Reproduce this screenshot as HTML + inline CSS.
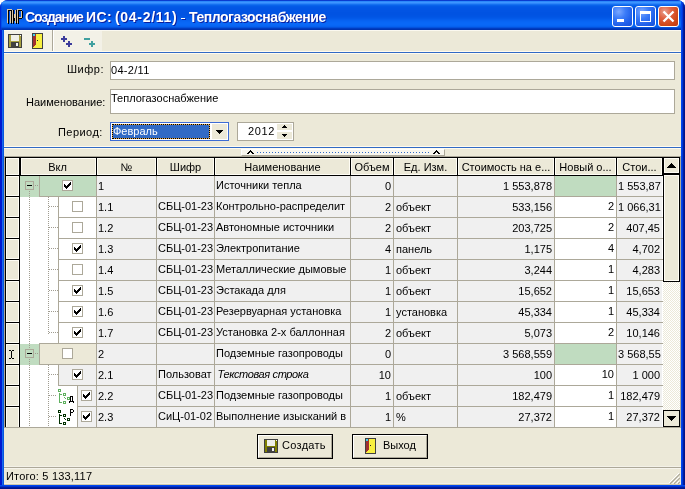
<!DOCTYPE html><html><head><meta charset="utf-8"><style>
html,body{margin:0;padding:0;background:#fff;width:685px;height:489px;overflow:hidden}
body{position:relative;font-family:"Liberation Sans",sans-serif;font-size:11px;color:#000}
div{position:absolute;box-sizing:border-box}
.t{white-space:pre;line-height:13px;will-change:transform}
</style></head><body>
<div style="left:0;top:0;width:685px;height:489px;border-radius:8px 8px 0 0;overflow:hidden;background:#0054E3">
<div style="left:0px;top:0px;width:685px;height:30px;background:linear-gradient(180deg,#0A3CD0 0px,#0A3CD0 1px,#2C88FA 1px,#2C88FA 2px,#3D95FF 2px,#3D95FF 3px,#2E86FA 3px,#2E86FA 4px,#1570F0 4px,#1570F0 5px,#0862EA 5px,#0862EA 6px,#045AE6 6px,#045AE6 7px,#0357E5 7px,#0357E5 8px,#0256E4 8px,#0256E4 9px,#0255E4 9px,#0255E4 10px,#0254E3 10px,#0254E3 11px,#0254E3 11px,#0254E3 12px,#0153E2 12px,#0153E2 13px,#0153E2 13px,#0153E2 14px,#0153E2 14px,#0153E2 15px,#0154E3 15px,#0154E3 16px,#0155E4 16px,#0155E4 17px,#0257E6 17px,#0257E6 18px,#035AE9 18px,#035AE9 19px,#055EED 19px,#055EED 20px,#0762F1 20px,#0762F1 21px,#0865F4 21px,#0865F4 22px,#0967F6 22px,#0967F6 23px,#0968F7 23px,#0968F7 24px,#0968F7 24px,#0968F7 25px,#0866F5 25px,#0866F5 26px,#0661EF 26px,#0661EF 27px,#0452DD 27px,#0452DD 28px,#003DC2 28px,#003DC2 29px,#0033B0 29px,#0033B0 30px)"></div>
<div style="left:0px;top:30px;width:4px;height:459px;background:linear-gradient(90deg,#0019CF 0,#0019CF 2px,#166AEE 2px,#166AEE 3px,#0855DD 3px,#0855DD 4px)"></div>
<div style="left:0px;top:0px;width:2px;height:30px;background:linear-gradient(90deg,#0028D0 0,#0030D8 1px,rgba(0,60,230,0.5) 1px,rgba(0,60,230,0.5) 2px)"></div>
<div style="left:681px;top:0px;width:4px;height:489px;background:linear-gradient(90deg,#0047EE 0,#0047EE 1px,#0036D8 1px,#0036D8 2px,#001EA0 2px,#001EA0 3px,#00138C 3px)"></div>
<div style="left:0px;top:485px;width:685px;height:4px;background:linear-gradient(180deg,#0047EE 0,#0047EE 1px,#0033D0 1px,#0033D0 2px,#001EA0 2px,#001EA0 3px,#00138C 3px)"></div>
</div>
<svg style="position:absolute;left:7px;top:9px" width="16" height="15" viewBox="0 0 16 15" shape-rendering="crispEdges"><g fill="#DCCBA8"><rect x="0" y="0" width="5" height="1"/><rect x="0" y="0" width="1" height="14"/><rect x="3" y="1" width="1" height="13"/><rect x="5" y="1" width="1" height="13"/><rect x="8" y="1" width="1" height="13"/><rect x="7" y="5" width="1" height="4"/><rect x="10" y="0" width="5" height="1"/><rect x="10" y="0" width="1" height="14"/><rect x="14" y="1" width="1" height="8"/><rect x="12" y="8" width="2" height="1"/></g><g fill="#000"><rect x="1" y="1" width="4" height="1"/><rect x="1" y="1" width="1" height="14"/><rect x="4" y="1" width="1" height="14"/><rect x="6" y="1" width="1" height="14"/><rect x="9" y="1" width="1" height="14"/><rect x="7" y="9" width="1" height="3"/><rect x="11" y="1" width="1" height="14"/><rect x="11" y="1" width="4" height="1"/><rect x="15" y="2" width="1" height="7"/><rect x="12" y="9" width="3" height="1"/></g></svg>
<div class="t" style="left:25px;top:9px;color:#fff;font-weight:bold;font-size:14px;line-height:16px;text-shadow:1px 1px #0A1E9E;letter-spacing:-1.15px">Создание</div>
<div class="t" style="left:86px;top:9px;color:#fff;font-weight:bold;font-size:14px;line-height:16px;text-shadow:1px 1px #0A1E9E;letter-spacing:0.4px">ИС:</div>
<div class="t" style="left:115px;top:9px;color:#fff;font-weight:bold;font-size:14px;line-height:16px;text-shadow:1px 1px #0A1E9E;letter-spacing:0.7px">(04-2/11)</div>
<div style="left:181px;top:18px;width:4px;height:1px;background:#fff;box-shadow:1px 1px #0A1E9E"></div>
<div class="t" style="left:189px;top:9px;color:#fff;font-weight:bold;font-size:14px;line-height:16px;text-shadow:1px 1px #0A1E9E;letter-spacing:-0.46px">Теплогазоснабжение</div>
<div style="left:612px;top:6px;width:21px;height:21px;border:1px solid #fff;border-radius:3px;background:radial-gradient(circle at 30% 25%,#7CA8FF 0,#3C7CF8 35%,#1F5FEA 70%,#1650D8 100%)"></div>
<div style="left:635px;top:6px;width:21px;height:21px;border:1px solid #fff;border-radius:3px;background:radial-gradient(circle at 30% 25%,#7CA8FF 0,#3C7CF8 35%,#1F5FEA 70%,#1650D8 100%)"></div>
<div style="left:658px;top:6px;width:21px;height:21px;border:1px solid #fff;border-radius:3px;background:radial-gradient(circle at 30% 25%,#E8A090 0,#E06040 35%,#D04818 70%,#C03810 100%)"></div>
<div style="left:617px;top:19px;width:7px;height:3px;background:#fff"></div>
<div style="left:640px;top:11px;width:11px;height:11px;border:1px solid #fff;border-top-width:3px"></div>
<svg style="position:absolute;left:662px;top:10px" width="13" height="13" viewBox="0 0 13 13"><path d="M1.5 1.5L11.5 11.5M11.5 1.5L1.5 11.5" stroke="#fff" stroke-width="2.3"/></svg>
<div style="left:4px;top:30px;width:677px;height:455px;background:#ECE9D8"></div>
<div style="left:4px;top:30px;width:98px;height:22px;background:#F3F1E7"></div>
<div style="left:4px;top:30px;width:677px;height:1px;background:#FBF9F0"></div>
<div style="left:52px;top:30px;width:1px;height:22px;background:#ACA899"></div>
<div style="left:53px;top:30px;width:1px;height:22px;background:#fff"></div>
<div style="left:4px;top:51px;width:677px;height:1px;background:#FFFBEF"></div>
<div style="left:4px;top:52px;width:677px;height:1px;background:#316AC5"></div>
<div style="left:4px;top:53px;width:677px;height:1px;background:#FFFBEF"></div>
<svg style="position:absolute;left:8px;top:34px" width="14" height="14" viewBox="0 0 14 14" shape-rendering="crispEdges">
<rect x="0" y="0" width="14" height="14" fill="#404040"/>
<rect x="1" y="1" width="12" height="12" fill="#A8A040"/>
<rect x="3" y="1" width="8" height="6" fill="#F0F0E8"/>
<rect x="3" y="8" width="8" height="5" fill="#404040"/>
<rect x="8" y="9" width="2" height="3" fill="#F0F0F0"/>
<rect x="12" y="1" width="1" height="1" fill="#fff"/>
</svg>
<svg style="position:absolute;left:32px;top:33px" width="11" height="16" viewBox="0 0 11 16" shape-rendering="crispEdges">
<rect x="0" y="0" width="11" height="16" fill="#404040"/>
<rect x="1" y="1" width="9" height="14" fill="#F8F040"/>
<path d="M1 1H4V11L1 15Z" fill="#A03030"/>
<rect x="1" y="1" width="2" height="2" fill="#40D0F0"/>
<rect x="5" y="7" width="1" height="1" fill="#202020"/>
</svg>
<div style="left:61px;top:38px;width:6px;height:2px;background:#3C3C9C"></div><div style="left:63px;top:36px;width:2px;height:6px;background:#3C3C9C"></div>
<div style="left:66px;top:43px;width:6px;height:2px;background:#3C3C9C"></div><div style="left:68px;top:41px;width:2px;height:6px;background:#3C3C9C"></div>
<div style="left:84px;top:38px;width:6px;height:2px;background:#40A0A0"></div>
<div style="left:89px;top:43px;width:6px;height:2px;background:#40A0A0"></div><div style="left:91px;top:41px;width:2px;height:6px;background:#40A0A0"></div>
<div class="t" style="left:67px;top:63px;letter-spacing:0.5px">Шифр:</div>
<div class="t" style="left:26px;top:96px;">Наименование:</div>
<div class="t" style="left:58px;top:126px;letter-spacing:0.45px">Период:</div>
<div style="left:110px;top:61px;width:565px;height:19px;border:1px solid #ACA899;background:#fff"></div>
<div class="t" style="left:111px;top:64px;letter-spacing:0.3px">04-2/11</div>
<div style="left:110px;top:89px;width:565px;height:25px;border:1px solid #ACA899;background:#fff"></div>
<div class="t" style="left:111px;top:92px;">Теплогазоснабжение</div>
<div style="left:110px;top:122px;width:119px;height:19px;border:1px solid #3D6CD4;background:#fff"></div>
<div style="left:112px;top:124px;width:98px;height:15px;background:#316AC5;border:1px solid #E8A848"></div>
<div style="left:112px;top:124px;width:98px;height:15px;border:1px dotted #000"></div>
<div class="t" style="left:113px;top:125px;color:#fff">Февраль</div>
<div style="left:212px;top:124px;width:15px;height:15px;background:#ECE9D8"></div>
<svg style="position:absolute;left:216px;top:130px" width="7" height="4" viewBox="0 0 7 4" shape-rendering="crispEdges"><path d="M0 0H7V1H6V2H5V3H4V4H3V3H2V2H1V1H0Z" fill="#000"/></svg>
<div style="left:237px;top:122px;width:57px;height:19px;border:1px solid #ACA899;background:#fff"></div>
<div class="t" style="left:248px;top:125px;letter-spacing:0.6px">2012</div>
<div style="left:277px;top:124px;width:15px;height:6px;background:#ECE9D8"></div>
<div style="left:277px;top:132px;width:15px;height:7px;background:#ECE9D8"></div>
<svg style="position:absolute;left:282px;top:125px" width="5" height="3" viewBox="0 0 5 3" shape-rendering="crispEdges"><path d="M2 0H3V1H4V2H5V3H0V2H1V1H2Z" fill="#000"/></svg>
<svg style="position:absolute;left:282px;top:134px" width="5" height="3" viewBox="0 0 5 3" shape-rendering="crispEdges"><path d="M0 0H5V1H4V2H3V3H2V2H1V1H0Z" fill="#000"/></svg>
<div style="left:4px;top:146px;width:677px;height:1px;background:#FFFBEF"></div>
<div style="left:4px;top:147px;width:677px;height:1px;background:#316AC5"></div>
<div style="left:4px;top:148px;width:677px;height:1px;background:#FFFBEF"></div>
<div style="left:241px;top:149px;width:204px;height:7px;background:#F8F6EE;border-left:1px solid #fff;border-top:1px solid #fff;border-right:1px solid #ACA899;border-bottom:1px solid #ACA899"></div>
<svg style="position:absolute;left:247px;top:150px" width="7" height="4" viewBox="0 0 7 4" shape-rendering="crispEdges"><path d="M3 0H4V1H5V2H6V3H7V4H5V3H4V2H3V3H2V4H0V3H1V2H2V1H3Z" fill="#000"/></svg>
<svg style="position:absolute;left:433px;top:150px" width="7" height="4" viewBox="0 0 7 4" shape-rendering="crispEdges"><path d="M3 0H4V1H5V2H6V3H7V4H5V3H4V2H3V3H2V4H0V3H1V2H2V1H3Z" fill="#000"/></svg>
<div style="left:257px;top:152px;width:172px;height:1px;background:repeating-linear-gradient(90deg,#316AC5 0,#316AC5 1px,transparent 1px,transparent 3px)"></div>
<div style="left:4px;top:156px;width:677px;height:272px;border:1px solid #ACA899;background:#ECE9D8"></div>
<div style="left:5px;top:157px;width:675px;height:1px;background:#000"></div>
<div style="left:5px;top:157px;width:1px;height:270px;background:#000"></div>
<div style="left:679px;top:157px;width:1px;height:270px;background:#000"></div>
<div style="left:5px;top:175px;width:658px;height:1px;background:#000"></div>
<div style="left:6px;top:158px;width:13px;height:17px;background:#ECE9D8;border:1px solid #FFFDF5"></div>
<div style="left:19px;top:157px;width:2px;height:19px;background:#000"></div>
<div style="left:21px;top:158px;width:75px;height:17px;background:#ECE9D8;border:1px solid #FFFDF5"></div>
<div style="left:96px;top:157px;width:1px;height:19px;background:#000"></div>
<div class="t" style="left:20px;top:161px;width:75px;text-align:center;overflow:hidden">Вкл</div>
<div style="left:97px;top:158px;width:59px;height:17px;background:#ECE9D8;border:1px solid #FFFDF5"></div>
<div style="left:156px;top:157px;width:1px;height:19px;background:#000"></div>
<div class="t" style="left:97px;top:161px;width:59px;text-align:center;overflow:hidden">№</div>
<div style="left:157px;top:158px;width:57px;height:17px;background:#ECE9D8;border:1px solid #FFFDF5"></div>
<div style="left:214px;top:157px;width:1px;height:19px;background:#000"></div>
<div class="t" style="left:157px;top:161px;width:57px;text-align:center;overflow:hidden">Шифр</div>
<div style="left:215px;top:158px;width:135px;height:17px;background:#ECE9D8;border:1px solid #FFFDF5"></div>
<div style="left:350px;top:157px;width:1px;height:19px;background:#000"></div>
<div class="t" style="left:215px;top:161px;width:135px;text-align:center;overflow:hidden">Наименование</div>
<div style="left:351px;top:158px;width:42px;height:17px;background:#ECE9D8;border:1px solid #FFFDF5"></div>
<div style="left:393px;top:157px;width:1px;height:19px;background:#000"></div>
<div class="t" style="left:351px;top:161px;width:42px;text-align:center;overflow:hidden">Объем</div>
<div style="left:394px;top:158px;width:63px;height:17px;background:#ECE9D8;border:1px solid #FFFDF5"></div>
<div style="left:457px;top:157px;width:1px;height:19px;background:#000"></div>
<div class="t" style="left:394px;top:161px;width:63px;text-align:center;overflow:hidden">Ед. Изм.</div>
<div style="left:458px;top:158px;width:96px;height:17px;background:#ECE9D8;border:1px solid #FFFDF5"></div>
<div style="left:554px;top:157px;width:1px;height:19px;background:#000"></div>
<div class="t" style="left:458px;top:161px;width:96px;text-align:center;overflow:hidden">Стоимость на е...</div>
<div style="left:555px;top:158px;width:61px;height:17px;background:#ECE9D8;border:1px solid #FFFDF5"></div>
<div style="left:616px;top:157px;width:1px;height:19px;background:#000"></div>
<div class="t" style="left:555px;top:161px;width:61px;text-align:center;overflow:hidden">Новый о...</div>
<div style="left:617px;top:158px;width:45px;height:17px;background:#ECE9D8;border:1px solid #FFFDF5"></div>
<div style="left:662px;top:157px;width:1px;height:19px;background:#000"></div>
<div class="t" style="left:617px;top:161px;width:45px;text-align:center;overflow:hidden">Стои...</div>
<div style="left:6px;top:176px;width:13px;height:20px;background:#ECE9D8;border:1px solid #FFFDF5"></div>
<div style="left:5px;top:196px;width:15px;height:1px;background:#000"></div>
<div style="left:6px;top:197px;width:13px;height:20px;background:#ECE9D8;border:1px solid #FFFDF5"></div>
<div style="left:5px;top:217px;width:15px;height:1px;background:#000"></div>
<div style="left:6px;top:218px;width:13px;height:20px;background:#ECE9D8;border:1px solid #FFFDF5"></div>
<div style="left:5px;top:238px;width:15px;height:1px;background:#000"></div>
<div style="left:6px;top:239px;width:13px;height:20px;background:#ECE9D8;border:1px solid #FFFDF5"></div>
<div style="left:5px;top:259px;width:15px;height:1px;background:#000"></div>
<div style="left:6px;top:260px;width:13px;height:20px;background:#ECE9D8;border:1px solid #FFFDF5"></div>
<div style="left:5px;top:280px;width:15px;height:1px;background:#000"></div>
<div style="left:6px;top:281px;width:13px;height:20px;background:#ECE9D8;border:1px solid #FFFDF5"></div>
<div style="left:5px;top:301px;width:15px;height:1px;background:#000"></div>
<div style="left:6px;top:302px;width:13px;height:20px;background:#ECE9D8;border:1px solid #FFFDF5"></div>
<div style="left:5px;top:322px;width:15px;height:1px;background:#000"></div>
<div style="left:6px;top:323px;width:13px;height:20px;background:#ECE9D8;border:1px solid #FFFDF5"></div>
<div style="left:5px;top:343px;width:15px;height:1px;background:#000"></div>
<div style="left:6px;top:344px;width:13px;height:20px;background:#ECE9D8;border:1px solid #FFFDF5"></div>
<div style="left:5px;top:364px;width:15px;height:1px;background:#000"></div>
<div style="left:6px;top:365px;width:13px;height:20px;background:#ECE9D8;border:1px solid #FFFDF5"></div>
<div style="left:5px;top:385px;width:15px;height:1px;background:#000"></div>
<div style="left:6px;top:386px;width:13px;height:20px;background:#ECE9D8;border:1px solid #FFFDF5"></div>
<div style="left:5px;top:406px;width:15px;height:1px;background:#000"></div>
<div style="left:6px;top:407px;width:13px;height:21px;background:#ECE9D8;border:1px solid #FFFDF5"></div>
<div style="left:19px;top:176px;width:1px;height:251px;background:#000"></div>
<svg style="position:absolute;left:9px;top:350px" width="5" height="9" viewBox="0 0 5 9" shape-rendering="crispEdges"><path d="M0 0H2V1H3V0H5V1H3V8H5V9H3V8H2V9H0V8H2V1H0Z" fill="#000"/></svg>
<div style="left:20px;top:176px;width:643px;height:251px;background:#fff"></div>
<div style="left:97px;top:176px;width:59px;height:20px;background:#F0F0F0"></div>
<div style="left:156px;top:176px;width:1px;height:21px;background:#ACA899"></div>
<div style="left:97px;top:196px;width:60px;height:1px;background:#ACA899"></div>
<div class="t" style="left:98px;top:180px;width:58px;overflow:hidden">1</div>
<div style="left:157px;top:176px;width:57px;height:20px;background:#F0F0F0"></div>
<div style="left:214px;top:176px;width:1px;height:21px;background:#ACA899"></div>
<div style="left:157px;top:196px;width:58px;height:1px;background:#ACA899"></div>
<div style="left:215px;top:176px;width:135px;height:20px;background:#F0F0F0"></div>
<div style="left:350px;top:176px;width:1px;height:21px;background:#ACA899"></div>
<div style="left:215px;top:196px;width:136px;height:1px;background:#ACA899"></div>
<div class="t" style="left:216px;top:179px;width:134px;overflow:hidden">Источники тепла</div>
<div style="left:351px;top:176px;width:42px;height:20px;background:#F0F0F0"></div>
<div style="left:393px;top:176px;width:1px;height:21px;background:#ACA899"></div>
<div style="left:351px;top:196px;width:43px;height:1px;background:#ACA899"></div>
<div class="t" style="left:352px;top:180px;width:39px;overflow:hidden;display:flex;justify-content:flex-end"><span style="flex:none">0</span></div>
<div style="left:394px;top:176px;width:63px;height:20px;background:#F0F0F0"></div>
<div style="left:457px;top:176px;width:1px;height:21px;background:#ACA899"></div>
<div style="left:394px;top:196px;width:64px;height:1px;background:#ACA899"></div>
<div style="left:458px;top:176px;width:96px;height:20px;background:#F0F0F0"></div>
<div style="left:554px;top:176px;width:1px;height:21px;background:#ACA899"></div>
<div style="left:458px;top:196px;width:97px;height:1px;background:#ACA899"></div>
<div class="t" style="left:459px;top:180px;width:93px;overflow:hidden;display:flex;justify-content:flex-end"><span style="flex:none">1 553,878</span></div>
<div style="left:555px;top:176px;width:61px;height:20px;background:#C0DCC0"></div>
<div style="left:616px;top:176px;width:1px;height:21px;background:#ACA899"></div>
<div style="left:555px;top:196px;width:62px;height:1px;background:#ACA899"></div>
<div style="left:617px;top:176px;width:45px;height:20px;background:#F0F0F0"></div>
<div style="left:617px;top:196px;width:46px;height:1px;background:#ACA899"></div>
<div class="t" style="left:618px;top:180px;width:44px;overflow:hidden">1 553,87</div>
<div style="left:20px;top:176px;width:19px;height:21px;background:#C0DCC0"></div>
<div style="left:39px;top:176px;width:57px;height:20px;background:#C0DCC0"></div>
<div style="left:39px;top:176px;width:1px;height:20px;background:#ACA899"></div>
<div style="left:39px;top:196px;width:58px;height:1px;background:#ACA899"></div>
<div style="left:62px;top:180px;width:11px;height:11px;border:1px solid #ACA899;background:#fff"></div><svg style="position:absolute;left:64px;top:182px" width="7" height="7" viewBox="0 0 7 7" shape-rendering="crispEdges"><path d="M6 0H7V3H6V4H5V5H4V6H3V7H2V6H1V5H0V2H1V3H2V4H3V3H4V2H5V1H6Z" fill="#000"/></svg>
<div style="left:97px;top:197px;width:59px;height:20px;background:#F0F0F0"></div>
<div style="left:156px;top:197px;width:1px;height:21px;background:#ACA899"></div>
<div style="left:97px;top:217px;width:60px;height:1px;background:#ACA899"></div>
<div class="t" style="left:98px;top:201px;width:58px;overflow:hidden">1.1</div>
<div style="left:157px;top:197px;width:57px;height:20px;background:#F0F0F0"></div>
<div style="left:214px;top:197px;width:1px;height:21px;background:#ACA899"></div>
<div style="left:157px;top:217px;width:58px;height:1px;background:#ACA899"></div>
<div class="t" style="left:158px;top:200px;width:56px;overflow:hidden">СБЦ-01-23</div>
<div style="left:215px;top:197px;width:135px;height:20px;background:#F0F0F0"></div>
<div style="left:350px;top:197px;width:1px;height:21px;background:#ACA899"></div>
<div style="left:215px;top:217px;width:136px;height:1px;background:#ACA899"></div>
<div class="t" style="left:216px;top:200px;width:134px;overflow:hidden">Контрольно-распределит</div>
<div style="left:351px;top:197px;width:42px;height:20px;background:#F0F0F0"></div>
<div style="left:393px;top:197px;width:1px;height:21px;background:#ACA899"></div>
<div style="left:351px;top:217px;width:43px;height:1px;background:#ACA899"></div>
<div class="t" style="left:352px;top:201px;width:39px;overflow:hidden;display:flex;justify-content:flex-end"><span style="flex:none">2</span></div>
<div style="left:394px;top:197px;width:63px;height:20px;background:#F0F0F0"></div>
<div style="left:457px;top:197px;width:1px;height:21px;background:#ACA899"></div>
<div style="left:394px;top:217px;width:64px;height:1px;background:#ACA899"></div>
<div class="t" style="left:396px;top:201px;width:61px;overflow:hidden">объект</div>
<div style="left:458px;top:197px;width:96px;height:20px;background:#F0F0F0"></div>
<div style="left:554px;top:197px;width:1px;height:21px;background:#ACA899"></div>
<div style="left:458px;top:217px;width:97px;height:1px;background:#ACA899"></div>
<div class="t" style="left:459px;top:201px;width:93px;overflow:hidden;display:flex;justify-content:flex-end"><span style="flex:none">533,156</span></div>
<div style="left:555px;top:197px;width:61px;height:20px;background:#fff"></div>
<div style="left:616px;top:197px;width:1px;height:21px;background:#ACA899"></div>
<div style="left:555px;top:217px;width:62px;height:1px;background:#ACA899"></div>
<div class="t" style="left:556px;top:200px;width:58px;overflow:hidden;display:flex;justify-content:flex-end"><span style="flex:none">2</span></div>
<div style="left:617px;top:197px;width:45px;height:20px;background:#F0F0F0"></div>
<div style="left:617px;top:217px;width:46px;height:1px;background:#ACA899"></div>
<div class="t" style="left:618px;top:201px;width:44px;overflow:hidden">1 066,31</div>
<div style="left:58px;top:197px;width:38px;height:20px;background:#fff"></div>
<div style="left:58px;top:197px;width:1px;height:21px;background:#ACA899"></div>
<div style="left:58px;top:217px;width:39px;height:1px;background:#ACA899"></div>
<div style="left:72px;top:201px;width:11px;height:11px;border:1px solid #ACA899;background:#fff"></div>
<div style="left:97px;top:218px;width:59px;height:20px;background:#F0F0F0"></div>
<div style="left:156px;top:218px;width:1px;height:21px;background:#ACA899"></div>
<div style="left:97px;top:238px;width:60px;height:1px;background:#ACA899"></div>
<div class="t" style="left:98px;top:222px;width:58px;overflow:hidden">1.2</div>
<div style="left:157px;top:218px;width:57px;height:20px;background:#F0F0F0"></div>
<div style="left:214px;top:218px;width:1px;height:21px;background:#ACA899"></div>
<div style="left:157px;top:238px;width:58px;height:1px;background:#ACA899"></div>
<div class="t" style="left:158px;top:221px;width:56px;overflow:hidden">СБЦ-01-23</div>
<div style="left:215px;top:218px;width:135px;height:20px;background:#F0F0F0"></div>
<div style="left:350px;top:218px;width:1px;height:21px;background:#ACA899"></div>
<div style="left:215px;top:238px;width:136px;height:1px;background:#ACA899"></div>
<div class="t" style="left:216px;top:221px;width:134px;overflow:hidden">Автономные источники</div>
<div style="left:351px;top:218px;width:42px;height:20px;background:#F0F0F0"></div>
<div style="left:393px;top:218px;width:1px;height:21px;background:#ACA899"></div>
<div style="left:351px;top:238px;width:43px;height:1px;background:#ACA899"></div>
<div class="t" style="left:352px;top:222px;width:39px;overflow:hidden;display:flex;justify-content:flex-end"><span style="flex:none">2</span></div>
<div style="left:394px;top:218px;width:63px;height:20px;background:#F0F0F0"></div>
<div style="left:457px;top:218px;width:1px;height:21px;background:#ACA899"></div>
<div style="left:394px;top:238px;width:64px;height:1px;background:#ACA899"></div>
<div class="t" style="left:396px;top:222px;width:61px;overflow:hidden">объект</div>
<div style="left:458px;top:218px;width:96px;height:20px;background:#F0F0F0"></div>
<div style="left:554px;top:218px;width:1px;height:21px;background:#ACA899"></div>
<div style="left:458px;top:238px;width:97px;height:1px;background:#ACA899"></div>
<div class="t" style="left:459px;top:222px;width:93px;overflow:hidden;display:flex;justify-content:flex-end"><span style="flex:none">203,725</span></div>
<div style="left:555px;top:218px;width:61px;height:20px;background:#fff"></div>
<div style="left:616px;top:218px;width:1px;height:21px;background:#ACA899"></div>
<div style="left:555px;top:238px;width:62px;height:1px;background:#ACA899"></div>
<div class="t" style="left:556px;top:221px;width:58px;overflow:hidden;display:flex;justify-content:flex-end"><span style="flex:none">2</span></div>
<div style="left:617px;top:218px;width:45px;height:20px;background:#F0F0F0"></div>
<div style="left:617px;top:238px;width:46px;height:1px;background:#ACA899"></div>
<div class="t" style="left:618px;top:222px;width:42px;overflow:hidden;display:flex;justify-content:flex-end"><span style="flex:none">407,45</span></div>
<div style="left:58px;top:218px;width:38px;height:20px;background:#fff"></div>
<div style="left:58px;top:218px;width:1px;height:21px;background:#ACA899"></div>
<div style="left:58px;top:238px;width:39px;height:1px;background:#ACA899"></div>
<div style="left:72px;top:222px;width:11px;height:11px;border:1px solid #ACA899;background:#fff"></div>
<div style="left:97px;top:239px;width:59px;height:20px;background:#F0F0F0"></div>
<div style="left:156px;top:239px;width:1px;height:21px;background:#ACA899"></div>
<div style="left:97px;top:259px;width:60px;height:1px;background:#ACA899"></div>
<div class="t" style="left:98px;top:243px;width:58px;overflow:hidden">1.3</div>
<div style="left:157px;top:239px;width:57px;height:20px;background:#F0F0F0"></div>
<div style="left:214px;top:239px;width:1px;height:21px;background:#ACA899"></div>
<div style="left:157px;top:259px;width:58px;height:1px;background:#ACA899"></div>
<div class="t" style="left:158px;top:242px;width:56px;overflow:hidden">СБЦ-01-23</div>
<div style="left:215px;top:239px;width:135px;height:20px;background:#F0F0F0"></div>
<div style="left:350px;top:239px;width:1px;height:21px;background:#ACA899"></div>
<div style="left:215px;top:259px;width:136px;height:1px;background:#ACA899"></div>
<div class="t" style="left:216px;top:242px;width:134px;overflow:hidden">Электропитание</div>
<div style="left:351px;top:239px;width:42px;height:20px;background:#F0F0F0"></div>
<div style="left:393px;top:239px;width:1px;height:21px;background:#ACA899"></div>
<div style="left:351px;top:259px;width:43px;height:1px;background:#ACA899"></div>
<div class="t" style="left:352px;top:243px;width:39px;overflow:hidden;display:flex;justify-content:flex-end"><span style="flex:none">4</span></div>
<div style="left:394px;top:239px;width:63px;height:20px;background:#F0F0F0"></div>
<div style="left:457px;top:239px;width:1px;height:21px;background:#ACA899"></div>
<div style="left:394px;top:259px;width:64px;height:1px;background:#ACA899"></div>
<div class="t" style="left:396px;top:243px;width:61px;overflow:hidden">панель</div>
<div style="left:458px;top:239px;width:96px;height:20px;background:#F0F0F0"></div>
<div style="left:554px;top:239px;width:1px;height:21px;background:#ACA899"></div>
<div style="left:458px;top:259px;width:97px;height:1px;background:#ACA899"></div>
<div class="t" style="left:459px;top:243px;width:93px;overflow:hidden;display:flex;justify-content:flex-end"><span style="flex:none">1,175</span></div>
<div style="left:555px;top:239px;width:61px;height:20px;background:#fff"></div>
<div style="left:616px;top:239px;width:1px;height:21px;background:#ACA899"></div>
<div style="left:555px;top:259px;width:62px;height:1px;background:#ACA899"></div>
<div class="t" style="left:556px;top:242px;width:58px;overflow:hidden;display:flex;justify-content:flex-end"><span style="flex:none">4</span></div>
<div style="left:617px;top:239px;width:45px;height:20px;background:#F0F0F0"></div>
<div style="left:617px;top:259px;width:46px;height:1px;background:#ACA899"></div>
<div class="t" style="left:618px;top:243px;width:42px;overflow:hidden;display:flex;justify-content:flex-end"><span style="flex:none">4,702</span></div>
<div style="left:58px;top:239px;width:38px;height:20px;background:#fff"></div>
<div style="left:58px;top:239px;width:1px;height:21px;background:#ACA899"></div>
<div style="left:58px;top:259px;width:39px;height:1px;background:#ACA899"></div>
<div style="left:72px;top:243px;width:11px;height:11px;border:1px solid #ACA899;background:#fff"></div><svg style="position:absolute;left:74px;top:245px" width="7" height="7" viewBox="0 0 7 7" shape-rendering="crispEdges"><path d="M6 0H7V3H6V4H5V5H4V6H3V7H2V6H1V5H0V2H1V3H2V4H3V3H4V2H5V1H6Z" fill="#000"/></svg>
<div style="left:97px;top:260px;width:59px;height:20px;background:#F0F0F0"></div>
<div style="left:156px;top:260px;width:1px;height:21px;background:#ACA899"></div>
<div style="left:97px;top:280px;width:60px;height:1px;background:#ACA899"></div>
<div class="t" style="left:98px;top:264px;width:58px;overflow:hidden">1.4</div>
<div style="left:157px;top:260px;width:57px;height:20px;background:#F0F0F0"></div>
<div style="left:214px;top:260px;width:1px;height:21px;background:#ACA899"></div>
<div style="left:157px;top:280px;width:58px;height:1px;background:#ACA899"></div>
<div class="t" style="left:158px;top:263px;width:56px;overflow:hidden">СБЦ-01-23</div>
<div style="left:215px;top:260px;width:135px;height:20px;background:#F0F0F0"></div>
<div style="left:350px;top:260px;width:1px;height:21px;background:#ACA899"></div>
<div style="left:215px;top:280px;width:136px;height:1px;background:#ACA899"></div>
<div class="t" style="left:216px;top:263px;width:134px;overflow:hidden">Металлические дымовые</div>
<div style="left:351px;top:260px;width:42px;height:20px;background:#F0F0F0"></div>
<div style="left:393px;top:260px;width:1px;height:21px;background:#ACA899"></div>
<div style="left:351px;top:280px;width:43px;height:1px;background:#ACA899"></div>
<div class="t" style="left:352px;top:264px;width:39px;overflow:hidden;display:flex;justify-content:flex-end"><span style="flex:none">1</span></div>
<div style="left:394px;top:260px;width:63px;height:20px;background:#F0F0F0"></div>
<div style="left:457px;top:260px;width:1px;height:21px;background:#ACA899"></div>
<div style="left:394px;top:280px;width:64px;height:1px;background:#ACA899"></div>
<div class="t" style="left:396px;top:264px;width:61px;overflow:hidden">объект</div>
<div style="left:458px;top:260px;width:96px;height:20px;background:#F0F0F0"></div>
<div style="left:554px;top:260px;width:1px;height:21px;background:#ACA899"></div>
<div style="left:458px;top:280px;width:97px;height:1px;background:#ACA899"></div>
<div class="t" style="left:459px;top:264px;width:93px;overflow:hidden;display:flex;justify-content:flex-end"><span style="flex:none">3,244</span></div>
<div style="left:555px;top:260px;width:61px;height:20px;background:#fff"></div>
<div style="left:616px;top:260px;width:1px;height:21px;background:#ACA899"></div>
<div style="left:555px;top:280px;width:62px;height:1px;background:#ACA899"></div>
<div class="t" style="left:556px;top:263px;width:58px;overflow:hidden;display:flex;justify-content:flex-end"><span style="flex:none">1</span></div>
<div style="left:617px;top:260px;width:45px;height:20px;background:#F0F0F0"></div>
<div style="left:617px;top:280px;width:46px;height:1px;background:#ACA899"></div>
<div class="t" style="left:618px;top:264px;width:42px;overflow:hidden;display:flex;justify-content:flex-end"><span style="flex:none">4,283</span></div>
<div style="left:58px;top:260px;width:38px;height:20px;background:#fff"></div>
<div style="left:58px;top:260px;width:1px;height:21px;background:#ACA899"></div>
<div style="left:58px;top:280px;width:39px;height:1px;background:#ACA899"></div>
<div style="left:72px;top:264px;width:11px;height:11px;border:1px solid #ACA899;background:#fff"></div>
<div style="left:97px;top:281px;width:59px;height:20px;background:#F0F0F0"></div>
<div style="left:156px;top:281px;width:1px;height:21px;background:#ACA899"></div>
<div style="left:97px;top:301px;width:60px;height:1px;background:#ACA899"></div>
<div class="t" style="left:98px;top:285px;width:58px;overflow:hidden">1.5</div>
<div style="left:157px;top:281px;width:57px;height:20px;background:#F0F0F0"></div>
<div style="left:214px;top:281px;width:1px;height:21px;background:#ACA899"></div>
<div style="left:157px;top:301px;width:58px;height:1px;background:#ACA899"></div>
<div class="t" style="left:158px;top:284px;width:56px;overflow:hidden">СБЦ-01-23</div>
<div style="left:215px;top:281px;width:135px;height:20px;background:#F0F0F0"></div>
<div style="left:350px;top:281px;width:1px;height:21px;background:#ACA899"></div>
<div style="left:215px;top:301px;width:136px;height:1px;background:#ACA899"></div>
<div class="t" style="left:216px;top:284px;width:134px;overflow:hidden">Эстакада для</div>
<div style="left:351px;top:281px;width:42px;height:20px;background:#F0F0F0"></div>
<div style="left:393px;top:281px;width:1px;height:21px;background:#ACA899"></div>
<div style="left:351px;top:301px;width:43px;height:1px;background:#ACA899"></div>
<div class="t" style="left:352px;top:285px;width:39px;overflow:hidden;display:flex;justify-content:flex-end"><span style="flex:none">1</span></div>
<div style="left:394px;top:281px;width:63px;height:20px;background:#F0F0F0"></div>
<div style="left:457px;top:281px;width:1px;height:21px;background:#ACA899"></div>
<div style="left:394px;top:301px;width:64px;height:1px;background:#ACA899"></div>
<div class="t" style="left:396px;top:285px;width:61px;overflow:hidden">объект</div>
<div style="left:458px;top:281px;width:96px;height:20px;background:#F0F0F0"></div>
<div style="left:554px;top:281px;width:1px;height:21px;background:#ACA899"></div>
<div style="left:458px;top:301px;width:97px;height:1px;background:#ACA899"></div>
<div class="t" style="left:459px;top:285px;width:93px;overflow:hidden;display:flex;justify-content:flex-end"><span style="flex:none">15,652</span></div>
<div style="left:555px;top:281px;width:61px;height:20px;background:#fff"></div>
<div style="left:616px;top:281px;width:1px;height:21px;background:#ACA899"></div>
<div style="left:555px;top:301px;width:62px;height:1px;background:#ACA899"></div>
<div class="t" style="left:556px;top:284px;width:58px;overflow:hidden;display:flex;justify-content:flex-end"><span style="flex:none">1</span></div>
<div style="left:617px;top:281px;width:45px;height:20px;background:#F0F0F0"></div>
<div style="left:617px;top:301px;width:46px;height:1px;background:#ACA899"></div>
<div class="t" style="left:618px;top:285px;width:42px;overflow:hidden;display:flex;justify-content:flex-end"><span style="flex:none">15,653</span></div>
<div style="left:58px;top:281px;width:38px;height:20px;background:#fff"></div>
<div style="left:58px;top:281px;width:1px;height:21px;background:#ACA899"></div>
<div style="left:58px;top:301px;width:39px;height:1px;background:#ACA899"></div>
<div style="left:72px;top:285px;width:11px;height:11px;border:1px solid #ACA899;background:#fff"></div><svg style="position:absolute;left:74px;top:287px" width="7" height="7" viewBox="0 0 7 7" shape-rendering="crispEdges"><path d="M6 0H7V3H6V4H5V5H4V6H3V7H2V6H1V5H0V2H1V3H2V4H3V3H4V2H5V1H6Z" fill="#000"/></svg>
<div style="left:97px;top:302px;width:59px;height:20px;background:#F0F0F0"></div>
<div style="left:156px;top:302px;width:1px;height:21px;background:#ACA899"></div>
<div style="left:97px;top:322px;width:60px;height:1px;background:#ACA899"></div>
<div class="t" style="left:98px;top:306px;width:58px;overflow:hidden">1.6</div>
<div style="left:157px;top:302px;width:57px;height:20px;background:#F0F0F0"></div>
<div style="left:214px;top:302px;width:1px;height:21px;background:#ACA899"></div>
<div style="left:157px;top:322px;width:58px;height:1px;background:#ACA899"></div>
<div class="t" style="left:158px;top:305px;width:56px;overflow:hidden">СБЦ-01-23</div>
<div style="left:215px;top:302px;width:135px;height:20px;background:#F0F0F0"></div>
<div style="left:350px;top:302px;width:1px;height:21px;background:#ACA899"></div>
<div style="left:215px;top:322px;width:136px;height:1px;background:#ACA899"></div>
<div class="t" style="left:216px;top:305px;width:134px;overflow:hidden">Резервуарная установка</div>
<div style="left:351px;top:302px;width:42px;height:20px;background:#F0F0F0"></div>
<div style="left:393px;top:302px;width:1px;height:21px;background:#ACA899"></div>
<div style="left:351px;top:322px;width:43px;height:1px;background:#ACA899"></div>
<div class="t" style="left:352px;top:306px;width:39px;overflow:hidden;display:flex;justify-content:flex-end"><span style="flex:none">1</span></div>
<div style="left:394px;top:302px;width:63px;height:20px;background:#F0F0F0"></div>
<div style="left:457px;top:302px;width:1px;height:21px;background:#ACA899"></div>
<div style="left:394px;top:322px;width:64px;height:1px;background:#ACA899"></div>
<div class="t" style="left:396px;top:306px;width:61px;overflow:hidden">установка</div>
<div style="left:458px;top:302px;width:96px;height:20px;background:#F0F0F0"></div>
<div style="left:554px;top:302px;width:1px;height:21px;background:#ACA899"></div>
<div style="left:458px;top:322px;width:97px;height:1px;background:#ACA899"></div>
<div class="t" style="left:459px;top:306px;width:93px;overflow:hidden;display:flex;justify-content:flex-end"><span style="flex:none">45,334</span></div>
<div style="left:555px;top:302px;width:61px;height:20px;background:#fff"></div>
<div style="left:616px;top:302px;width:1px;height:21px;background:#ACA899"></div>
<div style="left:555px;top:322px;width:62px;height:1px;background:#ACA899"></div>
<div class="t" style="left:556px;top:305px;width:58px;overflow:hidden;display:flex;justify-content:flex-end"><span style="flex:none">1</span></div>
<div style="left:617px;top:302px;width:45px;height:20px;background:#F0F0F0"></div>
<div style="left:617px;top:322px;width:46px;height:1px;background:#ACA899"></div>
<div class="t" style="left:618px;top:306px;width:42px;overflow:hidden;display:flex;justify-content:flex-end"><span style="flex:none">45,334</span></div>
<div style="left:58px;top:302px;width:38px;height:20px;background:#fff"></div>
<div style="left:58px;top:302px;width:1px;height:21px;background:#ACA899"></div>
<div style="left:58px;top:322px;width:39px;height:1px;background:#ACA899"></div>
<div style="left:72px;top:306px;width:11px;height:11px;border:1px solid #ACA899;background:#fff"></div><svg style="position:absolute;left:74px;top:308px" width="7" height="7" viewBox="0 0 7 7" shape-rendering="crispEdges"><path d="M6 0H7V3H6V4H5V5H4V6H3V7H2V6H1V5H0V2H1V3H2V4H3V3H4V2H5V1H6Z" fill="#000"/></svg>
<div style="left:97px;top:323px;width:59px;height:20px;background:#F0F0F0"></div>
<div style="left:156px;top:323px;width:1px;height:21px;background:#ACA899"></div>
<div style="left:97px;top:343px;width:60px;height:1px;background:#ACA899"></div>
<div class="t" style="left:98px;top:327px;width:58px;overflow:hidden">1.7</div>
<div style="left:157px;top:323px;width:57px;height:20px;background:#F0F0F0"></div>
<div style="left:214px;top:323px;width:1px;height:21px;background:#ACA899"></div>
<div style="left:157px;top:343px;width:58px;height:1px;background:#ACA899"></div>
<div class="t" style="left:158px;top:326px;width:56px;overflow:hidden">СБЦ-01-23</div>
<div style="left:215px;top:323px;width:135px;height:20px;background:#F0F0F0"></div>
<div style="left:350px;top:323px;width:1px;height:21px;background:#ACA899"></div>
<div style="left:215px;top:343px;width:136px;height:1px;background:#ACA899"></div>
<div class="t" style="left:216px;top:326px;width:134px;overflow:hidden">Установка 2-х баллонная</div>
<div style="left:351px;top:323px;width:42px;height:20px;background:#F0F0F0"></div>
<div style="left:393px;top:323px;width:1px;height:21px;background:#ACA899"></div>
<div style="left:351px;top:343px;width:43px;height:1px;background:#ACA899"></div>
<div class="t" style="left:352px;top:327px;width:39px;overflow:hidden;display:flex;justify-content:flex-end"><span style="flex:none">2</span></div>
<div style="left:394px;top:323px;width:63px;height:20px;background:#F0F0F0"></div>
<div style="left:457px;top:323px;width:1px;height:21px;background:#ACA899"></div>
<div style="left:394px;top:343px;width:64px;height:1px;background:#ACA899"></div>
<div class="t" style="left:396px;top:327px;width:61px;overflow:hidden">объект</div>
<div style="left:458px;top:323px;width:96px;height:20px;background:#F0F0F0"></div>
<div style="left:554px;top:323px;width:1px;height:21px;background:#ACA899"></div>
<div style="left:458px;top:343px;width:97px;height:1px;background:#ACA899"></div>
<div class="t" style="left:459px;top:327px;width:93px;overflow:hidden;display:flex;justify-content:flex-end"><span style="flex:none">5,073</span></div>
<div style="left:555px;top:323px;width:61px;height:20px;background:#fff"></div>
<div style="left:616px;top:323px;width:1px;height:21px;background:#ACA899"></div>
<div style="left:555px;top:343px;width:62px;height:1px;background:#ACA899"></div>
<div class="t" style="left:556px;top:326px;width:58px;overflow:hidden;display:flex;justify-content:flex-end"><span style="flex:none">2</span></div>
<div style="left:617px;top:323px;width:45px;height:20px;background:#F0F0F0"></div>
<div style="left:617px;top:343px;width:46px;height:1px;background:#ACA899"></div>
<div class="t" style="left:618px;top:327px;width:42px;overflow:hidden;display:flex;justify-content:flex-end"><span style="flex:none">10,146</span></div>
<div style="left:58px;top:323px;width:38px;height:20px;background:#fff"></div>
<div style="left:58px;top:323px;width:1px;height:21px;background:#ACA899"></div>
<div style="left:58px;top:343px;width:39px;height:1px;background:#ACA899"></div>
<div style="left:72px;top:327px;width:11px;height:11px;border:1px solid #ACA899;background:#fff"></div><svg style="position:absolute;left:74px;top:329px" width="7" height="7" viewBox="0 0 7 7" shape-rendering="crispEdges"><path d="M6 0H7V3H6V4H5V5H4V6H3V7H2V6H1V5H0V2H1V3H2V4H3V3H4V2H5V1H6Z" fill="#000"/></svg>
<div style="left:97px;top:344px;width:59px;height:20px;background:#F0F0F0"></div>
<div style="left:156px;top:344px;width:1px;height:21px;background:#ACA899"></div>
<div style="left:97px;top:364px;width:60px;height:1px;background:#ACA899"></div>
<div class="t" style="left:98px;top:348px;width:58px;overflow:hidden">2</div>
<div style="left:157px;top:344px;width:57px;height:20px;background:#F0F0F0"></div>
<div style="left:214px;top:344px;width:1px;height:21px;background:#ACA899"></div>
<div style="left:157px;top:364px;width:58px;height:1px;background:#ACA899"></div>
<div style="left:215px;top:344px;width:135px;height:20px;background:#F0F0F0"></div>
<div style="left:350px;top:344px;width:1px;height:21px;background:#ACA899"></div>
<div style="left:215px;top:364px;width:136px;height:1px;background:#ACA899"></div>
<div class="t" style="left:216px;top:347px;width:134px;overflow:hidden">Подземные газопроводы</div>
<div style="left:351px;top:344px;width:42px;height:20px;background:#F0F0F0"></div>
<div style="left:393px;top:344px;width:1px;height:21px;background:#ACA899"></div>
<div style="left:351px;top:364px;width:43px;height:1px;background:#ACA899"></div>
<div class="t" style="left:352px;top:348px;width:39px;overflow:hidden;display:flex;justify-content:flex-end"><span style="flex:none">0</span></div>
<div style="left:394px;top:344px;width:63px;height:20px;background:#F0F0F0"></div>
<div style="left:457px;top:344px;width:1px;height:21px;background:#ACA899"></div>
<div style="left:394px;top:364px;width:64px;height:1px;background:#ACA899"></div>
<div style="left:458px;top:344px;width:96px;height:20px;background:#F0F0F0"></div>
<div style="left:554px;top:344px;width:1px;height:21px;background:#ACA899"></div>
<div style="left:458px;top:364px;width:97px;height:1px;background:#ACA899"></div>
<div class="t" style="left:459px;top:348px;width:93px;overflow:hidden;display:flex;justify-content:flex-end"><span style="flex:none">3 568,559</span></div>
<div style="left:555px;top:344px;width:61px;height:20px;background:#C0DCC0"></div>
<div style="left:616px;top:344px;width:1px;height:21px;background:#ACA899"></div>
<div style="left:555px;top:364px;width:62px;height:1px;background:#ACA899"></div>
<div style="left:617px;top:344px;width:45px;height:20px;background:#F0F0F0"></div>
<div style="left:617px;top:364px;width:46px;height:1px;background:#ACA899"></div>
<div class="t" style="left:618px;top:348px;width:44px;overflow:hidden">3 568,55</div>
<div style="left:20px;top:344px;width:19px;height:21px;background:#C0DCC0"></div>
<div style="left:39px;top:344px;width:57px;height:20px;background:#ECE9D8"></div>
<div style="left:39px;top:343px;width:1px;height:21px;background:#ACA899"></div>
<div style="left:39px;top:364px;width:58px;height:1px;background:#ACA899"></div>
<div style="left:39px;top:343px;width:58px;height:1px;background:#ACA899"></div>
<div style="left:62px;top:348px;width:11px;height:11px;border:1px solid #ACA899;background:#fff"></div>
<div style="left:97px;top:365px;width:59px;height:20px;background:#F0F0F0"></div>
<div style="left:156px;top:365px;width:1px;height:21px;background:#ACA899"></div>
<div style="left:97px;top:385px;width:60px;height:1px;background:#ACA899"></div>
<div class="t" style="left:98px;top:369px;width:58px;overflow:hidden">2.1</div>
<div style="left:157px;top:365px;width:57px;height:20px;background:#F0F0F0"></div>
<div style="left:214px;top:365px;width:1px;height:21px;background:#ACA899"></div>
<div style="left:157px;top:385px;width:58px;height:1px;background:#ACA899"></div>
<div class="t" style="left:158px;top:368px;width:56px;overflow:hidden">Пользоват</div>
<div style="left:215px;top:365px;width:135px;height:20px;background:#F0F0F0"></div>
<div style="left:350px;top:365px;width:1px;height:21px;background:#ACA899"></div>
<div style="left:215px;top:385px;width:136px;height:1px;background:#ACA899"></div>
<div class="t" style="left:216px;top:368px;width:134px;overflow:hidden"><i style="letter-spacing:-0.37px;padding-left:1.5px">Текстовая строка</i></div>
<div style="left:351px;top:365px;width:42px;height:20px;background:#F0F0F0"></div>
<div style="left:393px;top:365px;width:1px;height:21px;background:#ACA899"></div>
<div style="left:351px;top:385px;width:43px;height:1px;background:#ACA899"></div>
<div class="t" style="left:352px;top:369px;width:39px;overflow:hidden;display:flex;justify-content:flex-end"><span style="flex:none">10</span></div>
<div style="left:394px;top:365px;width:63px;height:20px;background:#F0F0F0"></div>
<div style="left:457px;top:365px;width:1px;height:21px;background:#ACA899"></div>
<div style="left:394px;top:385px;width:64px;height:1px;background:#ACA899"></div>
<div style="left:458px;top:365px;width:96px;height:20px;background:#F0F0F0"></div>
<div style="left:554px;top:365px;width:1px;height:21px;background:#ACA899"></div>
<div style="left:458px;top:385px;width:97px;height:1px;background:#ACA899"></div>
<div class="t" style="left:459px;top:369px;width:93px;overflow:hidden;display:flex;justify-content:flex-end"><span style="flex:none">100</span></div>
<div style="left:555px;top:365px;width:61px;height:20px;background:#fff"></div>
<div style="left:616px;top:365px;width:1px;height:21px;background:#ACA899"></div>
<div style="left:555px;top:385px;width:62px;height:1px;background:#ACA899"></div>
<div class="t" style="left:556px;top:368px;width:58px;overflow:hidden;display:flex;justify-content:flex-end"><span style="flex:none">10</span></div>
<div style="left:617px;top:365px;width:45px;height:20px;background:#F0F0F0"></div>
<div style="left:617px;top:385px;width:46px;height:1px;background:#ACA899"></div>
<div class="t" style="left:618px;top:369px;width:42px;overflow:hidden;display:flex;justify-content:flex-end"><span style="flex:none">1 000</span></div>
<div style="left:58px;top:365px;width:38px;height:20px;background:#F0F0F0"></div>
<div style="left:58px;top:365px;width:1px;height:21px;background:#ACA899"></div>
<div style="left:58px;top:385px;width:39px;height:1px;background:#ACA899"></div>
<div style="left:72px;top:369px;width:11px;height:11px;border:1px solid #ACA899;background:#fff"></div><svg style="position:absolute;left:74px;top:371px" width="7" height="7" viewBox="0 0 7 7" shape-rendering="crispEdges"><path d="M6 0H7V3H6V4H5V5H4V6H3V7H2V6H1V5H0V2H1V3H2V4H3V3H4V2H5V1H6Z" fill="#000"/></svg>
<div style="left:97px;top:386px;width:59px;height:20px;background:#F0F0F0"></div>
<div style="left:156px;top:386px;width:1px;height:21px;background:#ACA899"></div>
<div style="left:97px;top:406px;width:60px;height:1px;background:#ACA899"></div>
<div class="t" style="left:98px;top:390px;width:58px;overflow:hidden">2.2</div>
<div style="left:157px;top:386px;width:57px;height:20px;background:#F0F0F0"></div>
<div style="left:214px;top:386px;width:1px;height:21px;background:#ACA899"></div>
<div style="left:157px;top:406px;width:58px;height:1px;background:#ACA899"></div>
<div class="t" style="left:158px;top:389px;width:56px;overflow:hidden">СБЦ-01-23</div>
<div style="left:215px;top:386px;width:135px;height:20px;background:#F0F0F0"></div>
<div style="left:350px;top:386px;width:1px;height:21px;background:#ACA899"></div>
<div style="left:215px;top:406px;width:136px;height:1px;background:#ACA899"></div>
<div class="t" style="left:216px;top:389px;width:134px;overflow:hidden">Подземные газопроводы</div>
<div style="left:351px;top:386px;width:42px;height:20px;background:#F0F0F0"></div>
<div style="left:393px;top:386px;width:1px;height:21px;background:#ACA899"></div>
<div style="left:351px;top:406px;width:43px;height:1px;background:#ACA899"></div>
<div class="t" style="left:352px;top:390px;width:39px;overflow:hidden;display:flex;justify-content:flex-end"><span style="flex:none">1</span></div>
<div style="left:394px;top:386px;width:63px;height:20px;background:#F0F0F0"></div>
<div style="left:457px;top:386px;width:1px;height:21px;background:#ACA899"></div>
<div style="left:394px;top:406px;width:64px;height:1px;background:#ACA899"></div>
<div class="t" style="left:396px;top:390px;width:61px;overflow:hidden">объект</div>
<div style="left:458px;top:386px;width:96px;height:20px;background:#F0F0F0"></div>
<div style="left:554px;top:386px;width:1px;height:21px;background:#ACA899"></div>
<div style="left:458px;top:406px;width:97px;height:1px;background:#ACA899"></div>
<div class="t" style="left:459px;top:390px;width:93px;overflow:hidden;display:flex;justify-content:flex-end"><span style="flex:none">182,479</span></div>
<div style="left:555px;top:386px;width:61px;height:20px;background:#fff"></div>
<div style="left:616px;top:386px;width:1px;height:21px;background:#ACA899"></div>
<div style="left:555px;top:406px;width:62px;height:1px;background:#ACA899"></div>
<div class="t" style="left:556px;top:389px;width:58px;overflow:hidden;display:flex;justify-content:flex-end"><span style="flex:none">1</span></div>
<div style="left:617px;top:386px;width:45px;height:20px;background:#F0F0F0"></div>
<div style="left:617px;top:406px;width:46px;height:1px;background:#ACA899"></div>
<div class="t" style="left:618px;top:390px;width:42px;overflow:hidden;display:flex;justify-content:flex-end"><span style="flex:none">182,479</span></div>
<div style="left:77px;top:386px;width:19px;height:20px;background:#F0F0F0"></div>
<div style="left:77px;top:386px;width:1px;height:21px;background:#ACA899"></div>
<div style="left:77px;top:406px;width:20px;height:1px;background:#ACA899"></div>
<div style="left:81px;top:390px;width:11px;height:11px;border:1px solid #ACA899;background:#fff"></div><svg style="position:absolute;left:83px;top:392px" width="7" height="7" viewBox="0 0 7 7" shape-rendering="crispEdges"><path d="M6 0H7V3H6V4H5V5H4V6H3V7H2V6H1V5H0V2H1V3H2V4H3V3H4V2H5V1H6Z" fill="#000"/></svg>
<div style="left:97px;top:407px;width:59px;height:20px;background:#F0F0F0"></div>
<div style="left:156px;top:407px;width:1px;height:21px;background:#ACA899"></div>
<div style="left:97px;top:427px;width:60px;height:1px;background:#ACA899"></div>
<div class="t" style="left:98px;top:411px;width:58px;overflow:hidden">2.3</div>
<div style="left:157px;top:407px;width:57px;height:20px;background:#F0F0F0"></div>
<div style="left:214px;top:407px;width:1px;height:21px;background:#ACA899"></div>
<div style="left:157px;top:427px;width:58px;height:1px;background:#ACA899"></div>
<div class="t" style="left:158px;top:410px;width:56px;overflow:hidden">СиЦ-01-02</div>
<div style="left:215px;top:407px;width:135px;height:20px;background:#F0F0F0"></div>
<div style="left:350px;top:407px;width:1px;height:21px;background:#ACA899"></div>
<div style="left:215px;top:427px;width:136px;height:1px;background:#ACA899"></div>
<div class="t" style="left:216px;top:410px;width:134px;overflow:hidden">Выполнение изысканий в</div>
<div style="left:351px;top:407px;width:42px;height:20px;background:#F0F0F0"></div>
<div style="left:393px;top:407px;width:1px;height:21px;background:#ACA899"></div>
<div style="left:351px;top:427px;width:43px;height:1px;background:#ACA899"></div>
<div class="t" style="left:352px;top:411px;width:39px;overflow:hidden;display:flex;justify-content:flex-end"><span style="flex:none">1</span></div>
<div style="left:394px;top:407px;width:63px;height:20px;background:#F0F0F0"></div>
<div style="left:457px;top:407px;width:1px;height:21px;background:#ACA899"></div>
<div style="left:394px;top:427px;width:64px;height:1px;background:#ACA899"></div>
<div class="t" style="left:396px;top:411px;width:61px;overflow:hidden">%</div>
<div style="left:458px;top:407px;width:96px;height:20px;background:#F0F0F0"></div>
<div style="left:554px;top:407px;width:1px;height:21px;background:#ACA899"></div>
<div style="left:458px;top:427px;width:97px;height:1px;background:#ACA899"></div>
<div class="t" style="left:459px;top:411px;width:93px;overflow:hidden;display:flex;justify-content:flex-end"><span style="flex:none">27,372</span></div>
<div style="left:555px;top:407px;width:61px;height:20px;background:#fff"></div>
<div style="left:616px;top:407px;width:1px;height:21px;background:#ACA899"></div>
<div style="left:555px;top:427px;width:62px;height:1px;background:#ACA899"></div>
<div class="t" style="left:556px;top:410px;width:58px;overflow:hidden;display:flex;justify-content:flex-end"><span style="flex:none">1</span></div>
<div style="left:617px;top:407px;width:45px;height:20px;background:#F0F0F0"></div>
<div style="left:617px;top:427px;width:46px;height:1px;background:#ACA899"></div>
<div class="t" style="left:618px;top:411px;width:42px;overflow:hidden;display:flex;justify-content:flex-end"><span style="flex:none">27,372</span></div>
<div style="left:77px;top:407px;width:19px;height:20px;background:#F0F0F0"></div>
<div style="left:77px;top:407px;width:1px;height:21px;background:#ACA899"></div>
<div style="left:77px;top:427px;width:20px;height:1px;background:#ACA899"></div>
<div style="left:81px;top:411px;width:11px;height:11px;border:1px solid #ACA899;background:#fff"></div><svg style="position:absolute;left:83px;top:413px" width="7" height="7" viewBox="0 0 7 7" shape-rendering="crispEdges"><path d="M6 0H7V3H6V4H5V5H4V6H3V7H2V6H1V5H0V2H1V3H2V4H3V3H4V2H5V1H6Z" fill="#000"/></svg>
<div style="left:29px;top:191px;width:1px;height:236px;background:repeating-linear-gradient(180deg,#A09C90 0,#A09C90 1px,transparent 1px,transparent 2px)"></div>
<div style="left:48px;top:197px;width:1px;height:137px;background:repeating-linear-gradient(180deg,#A09C90 0,#A09C90 1px,transparent 1px,transparent 2px)"></div>
<div style="left:48px;top:365px;width:1px;height:62px;background:repeating-linear-gradient(180deg,#A09C90 0,#A09C90 1px,transparent 1px,transparent 2px)"></div>
<div style="left:49px;top:206px;width:9px;height:1px;background:repeating-linear-gradient(90deg,#A09C90 0,#A09C90 1px,transparent 1px,transparent 2px)"></div>
<div style="left:49px;top:227px;width:9px;height:1px;background:repeating-linear-gradient(90deg,#A09C90 0,#A09C90 1px,transparent 1px,transparent 2px)"></div>
<div style="left:49px;top:248px;width:9px;height:1px;background:repeating-linear-gradient(90deg,#A09C90 0,#A09C90 1px,transparent 1px,transparent 2px)"></div>
<div style="left:49px;top:269px;width:9px;height:1px;background:repeating-linear-gradient(90deg,#A09C90 0,#A09C90 1px,transparent 1px,transparent 2px)"></div>
<div style="left:49px;top:290px;width:9px;height:1px;background:repeating-linear-gradient(90deg,#A09C90 0,#A09C90 1px,transparent 1px,transparent 2px)"></div>
<div style="left:49px;top:311px;width:9px;height:1px;background:repeating-linear-gradient(90deg,#A09C90 0,#A09C90 1px,transparent 1px,transparent 2px)"></div>
<div style="left:49px;top:332px;width:9px;height:1px;background:repeating-linear-gradient(90deg,#A09C90 0,#A09C90 1px,transparent 1px,transparent 2px)"></div>
<div style="left:49px;top:374px;width:9px;height:1px;background:repeating-linear-gradient(90deg,#A09C90 0,#A09C90 1px,transparent 1px,transparent 2px)"></div>
<div style="left:49px;top:395px;width:8px;height:1px;background:repeating-linear-gradient(90deg,#A09C90 0,#A09C90 1px,transparent 1px,transparent 2px)"></div>
<div style="left:49px;top:416px;width:8px;height:1px;background:repeating-linear-gradient(90deg,#A09C90 0,#A09C90 1px,transparent 1px,transparent 2px)"></div>
<div style="left:25px;top:181px;width:9px;height:9px;border:1px solid #ACA899;background:#C0DCC0"></div>
<div style="left:27px;top:185px;width:5px;height:1px;background:#000"></div>
<div style="left:35px;top:185px;width:4px;height:1px;background:repeating-linear-gradient(90deg,#A09C90 0,#A09C90 1px,transparent 1px,transparent 2px)"></div>
<div style="left:25px;top:349px;width:9px;height:9px;border:1px solid #ACA899;background:#C0DCC0"></div>
<div style="left:27px;top:353px;width:5px;height:1px;background:#000"></div>
<div style="left:35px;top:353px;width:4px;height:1px;background:repeating-linear-gradient(90deg,#A09C90 0,#A09C90 1px,transparent 1px,transparent 2px)"></div>
<div style="left:96px;top:176px;width:1px;height:251px;background:#ACA899"></div>
<svg style="position:absolute;left:58px;top:389px" width="12" height="15" viewBox="0 0 12 15" shape-rendering="crispEdges" fill="#60B060"><rect x="0" y="0" width="1" height="1"/><rect x="1" y="0" width="1" height="1"/><rect x="2" y="0" width="1" height="1"/><rect x="0" y="1" width="1" height="1"/><rect x="2" y="1" width="1" height="1"/><rect x="0" y="2" width="1" height="1"/><rect x="1" y="2" width="1" height="1"/><rect x="2" y="2" width="1" height="1"/><rect x="5" y="4" width="1" height="1"/><rect x="6" y="4" width="1" height="1"/><rect x="7" y="4" width="1" height="1"/><rect x="5" y="5" width="1" height="1"/><rect x="7" y="5" width="1" height="1"/><rect x="5" y="6" width="1" height="1"/><rect x="6" y="6" width="1" height="1"/><rect x="7" y="6" width="1" height="1"/><rect x="5" y="12" width="1" height="1"/><rect x="6" y="12" width="1" height="1"/><rect x="7" y="12" width="1" height="1"/><rect x="5" y="13" width="1" height="1"/><rect x="7" y="13" width="1" height="1"/><rect x="5" y="14" width="1" height="1"/><rect x="6" y="14" width="1" height="1"/><rect x="7" y="14" width="1" height="1"/><rect x="9" y="8" width="1" height="1"/><rect x="10" y="8" width="1" height="1"/><rect x="11" y="8" width="1" height="1"/><rect x="9" y="9" width="1" height="1"/><rect x="11" y="9" width="1" height="1"/><rect x="9" y="10" width="1" height="1"/><rect x="10" y="10" width="1" height="1"/><rect x="11" y="10" width="1" height="1"/><rect x="1" y="4" width="1" height="10"/><rect x="2" y="5" width="2" height="1"/><rect x="2" y="13" width="2" height="1"/><rect x="6" y="8" width="1" height="1"/><rect x="7" y="9" width="1" height="1"/></svg><svg style="position:absolute;left:69px;top:396px" width="5" height="7" viewBox="0 0 5 7" shape-rendering="crispEdges" fill="#000"><rect x="1" y="0" width="1" height="1"/><rect x="2" y="0" width="1" height="1"/><rect x="3" y="0" width="1" height="1"/><rect x="1" y="1" width="1" height="1"/><rect x="3" y="1" width="1" height="1"/><rect x="1" y="2" width="1" height="1"/><rect x="3" y="2" width="1" height="1"/><rect x="1" y="3" width="1" height="1"/><rect x="3" y="3" width="1" height="1"/><rect x="1" y="4" width="1" height="1"/><rect x="3" y="4" width="1" height="1"/><rect x="0" y="5" width="1" height="1"/><rect x="1" y="5" width="1" height="1"/><rect x="2" y="5" width="1" height="1"/><rect x="3" y="5" width="1" height="1"/><rect x="4" y="5" width="1" height="1"/><rect x="0" y="6" width="1" height="1"/><rect x="4" y="6" width="1" height="1"/></svg>
<svg style="position:absolute;left:58px;top:410px" width="12" height="15" viewBox="0 0 12 15" shape-rendering="crispEdges" fill="#003000"><rect x="0" y="0" width="1" height="1"/><rect x="1" y="0" width="1" height="1"/><rect x="2" y="0" width="1" height="1"/><rect x="0" y="1" width="1" height="1"/><rect x="2" y="1" width="1" height="1"/><rect x="0" y="2" width="1" height="1"/><rect x="1" y="2" width="1" height="1"/><rect x="2" y="2" width="1" height="1"/><rect x="5" y="4" width="1" height="1"/><rect x="6" y="4" width="1" height="1"/><rect x="7" y="4" width="1" height="1"/><rect x="5" y="5" width="1" height="1"/><rect x="7" y="5" width="1" height="1"/><rect x="5" y="6" width="1" height="1"/><rect x="6" y="6" width="1" height="1"/><rect x="7" y="6" width="1" height="1"/><rect x="5" y="12" width="1" height="1"/><rect x="6" y="12" width="1" height="1"/><rect x="7" y="12" width="1" height="1"/><rect x="5" y="13" width="1" height="1"/><rect x="7" y="13" width="1" height="1"/><rect x="5" y="14" width="1" height="1"/><rect x="6" y="14" width="1" height="1"/><rect x="7" y="14" width="1" height="1"/><rect x="9" y="8" width="1" height="1"/><rect x="10" y="8" width="1" height="1"/><rect x="11" y="8" width="1" height="1"/><rect x="9" y="9" width="1" height="1"/><rect x="11" y="9" width="1" height="1"/><rect x="9" y="10" width="1" height="1"/><rect x="10" y="10" width="1" height="1"/><rect x="11" y="10" width="1" height="1"/><rect x="1" y="4" width="1" height="10"/><rect x="2" y="5" width="2" height="1"/><rect x="2" y="13" width="2" height="1"/><rect x="6" y="8" width="1" height="1"/><rect x="7" y="9" width="1" height="1"/></svg><svg style="position:absolute;left:70px;top:409px" width="4" height="7" viewBox="0 0 4 7" shape-rendering="crispEdges" fill="#000"><rect x="0" y="0" width="1" height="1"/><rect x="1" y="0" width="1" height="1"/><rect x="2" y="0" width="1" height="1"/><rect x="0" y="1" width="1" height="1"/><rect x="3" y="1" width="1" height="1"/><rect x="0" y="2" width="1" height="1"/><rect x="3" y="2" width="1" height="1"/><rect x="0" y="3" width="1" height="1"/><rect x="1" y="3" width="1" height="1"/><rect x="2" y="3" width="1" height="1"/><rect x="0" y="4" width="1" height="1"/><rect x="0" y="5" width="1" height="1"/><rect x="0" y="6" width="1" height="1"/></svg>
<div style="left:663px;top:157px;width:1px;height:270px;background:#000"></div>
<div style="left:664px;top:158px;width:15px;height:15px;background:#ECE9D8;border:1px solid #FFFDF5"></div>
<div style="left:663px;top:173px;width:17px;height:2px;background:#000"></div>
<svg style="position:absolute;left:667px;top:163px" width="9" height="5" viewBox="0 0 9 5" shape-rendering="crispEdges"><path d="M4 0H5V1H6V2H7V3H8V4H9V5H0V4H1V3H2V2H3V1H4Z" fill="#000"/></svg>
<div style="left:664px;top:175px;width:15px;height:106px;background:#ECE9D8;border:1px solid #FFFDF5"></div>
<div style="left:663px;top:281px;width:17px;height:1px;background:#000"></div>
<div style="left:663px;top:282px;width:17px;height:128px;background-color:#fff;background-image:linear-gradient(45deg,#ECE9D8 25%,transparent 25%,transparent 75%,#ECE9D8 75%),linear-gradient(45deg,#ECE9D8 25%,transparent 25%,transparent 75%,#ECE9D8 75%);background-size:2px 2px;background-position:0 0,1px 1px"></div>
<div style="left:663px;top:410px;width:17px;height:17px;border:1px solid #000;background:#ECE9D8"></div>
<svg style="position:absolute;left:667px;top:416px" width="9" height="5" viewBox="0 0 9 5" shape-rendering="crispEdges"><path d="M0 0H9V1H8V2H7V3H6V4H5V5H4V4H3V3H2V2H1V1H0Z" fill="#000"/></svg>
<div style="left:4px;top:427px;width:677px;height:1px;background:#ACA899"></div>
<div style="left:257px;top:434px;width:76px;height:25px;border:1px solid #000;background:#ECE9D8"></div><div style="left:258px;top:435px;width:74px;height:23px;border-left:1px solid #fff;border-top:1px solid #fff;border-right:1px solid #ACA899;border-bottom:1px solid #ACA899"></div><svg style="position:absolute;left:264px;top:439px" width="14" height="14" viewBox="0 0 14 14" shape-rendering="crispEdges">
<rect x="0" y="0" width="14" height="14" fill="#404040"/>
<rect x="1" y="1" width="12" height="12" fill="#808000"/>
<rect x="3" y="1" width="8" height="6" fill="#F0F0E8"/>
<rect x="3" y="8" width="8" height="5" fill="#404040"/>
<rect x="8" y="9" width="2" height="3" fill="#F0F0F0"/>
<rect x="12" y="1" width="1" height="1" fill="#fff"/>
</svg><div class="t" style="left:282px;top:439px;letter-spacing:0.3px">Создать</div>
<div style="left:352px;top:434px;width:76px;height:25px;border:1px solid #000;background:#ECE9D8"></div><div style="left:353px;top:435px;width:74px;height:23px;border-left:1px solid #fff;border-top:1px solid #fff;border-right:1px solid #ACA899;border-bottom:1px solid #ACA899"></div><svg style="position:absolute;left:365px;top:438px" width="11" height="16" viewBox="0 0 11 16" shape-rendering="crispEdges">
<rect x="0" y="0" width="11" height="16" fill="#404040"/>
<rect x="1" y="1" width="9" height="14" fill="#F8F040"/>
<path d="M1 1H4V11L1 15Z" fill="#A03030"/>
<rect x="1" y="1" width="2" height="2" fill="#40D0F0"/>
<rect x="5" y="7" width="1" height="1" fill="#202020"/>
</svg><div class="t" style="left:383px;top:439px;">Выход</div>
<div style="left:4px;top:467px;width:677px;height:1px;background:#ACA899"></div>
<div style="left:4px;top:468px;width:677px;height:1px;background:#F6F4EC"></div>
<div style="left:4px;top:466px;width:677px;height:1px;background:#F3F1E8"></div>
<div style="left:4px;top:483px;width:677px;height:1px;background:#F3F1E8"></div>
<div class="t" style="left:6px;top:470px;letter-spacing:0.2px">Итого: 5 133,117</div>
<div style="left:4px;top:484px;width:677px;height:1px;background:#CFC8AC"></div>
<svg style="position:absolute;left:668px;top:472px" width="12" height="12" viewBox="0 0 12 12"><path d="M11 1L1 11M11 5L5 11M11 9L9 11" stroke="#fff" stroke-width="1"/><path d="M12 2L2 12M12 6L6 12M12 10L10 12" stroke="#ACA899" stroke-width="1.2"/></svg>
</body></html>
